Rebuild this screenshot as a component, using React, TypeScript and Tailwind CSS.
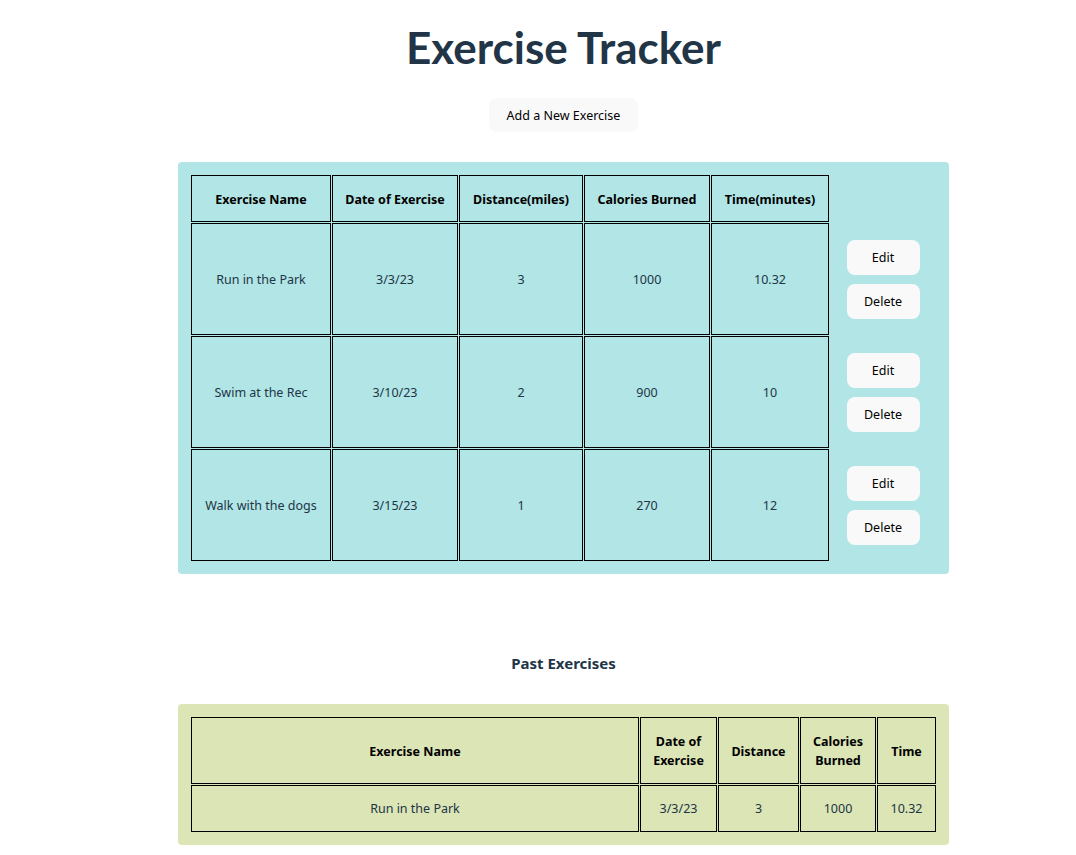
import React from "react";

const exercises = [
  { name: "Run in the Park", date: "3/3/23", distance: "3", calories: "1000", time: "10.32" },
  { name: "Swim at the Rec", date: "3/10/23", distance: "2", calories: "900", time: "10" },
  { name: "Walk with the dogs", date: "3/15/23", distance: "1", calories: "270", time: "12" },
];

const past = [{ name: "Run in the Park", date: "3/3/23", distance: "3", calories: "1000", time: "10.32" }];

const th = "border border-black pt-[3px] font-bold text-black text-[12.5px] align-middle";
const td = "border border-black pt-[2px] text-[12.5px] text-[#213547] align-middle";
const btn = "w-[73px] h-[35px] pt-[2px] rounded-lg bg-[#f9f9f9] text-black text-[12.5px]";

export default function App() {
  return (
    <div className="min-h-screen bg-white font-['Noto_Sans',sans-serif] text-center text-[#213547]">
      <div className="ml-[178px] w-[771px] flex flex-col items-center">
        <h1 className="mt-[19px] font-['Lato',sans-serif] text-[44px] leading-[56px] font-bold text-[#213547]">
          Exercise Tracker
        </h1>

        <button className="mt-[23px] h-[34px] px-[18px] pt-[3px] rounded-lg bg-[#f9f9f9] text-black text-[12.5px]">
          Add a New Exercise
        </button>

        {/* current exercises */}
        <div className="mt-[30px] w-full rounded bg-[#b2e5e5] px-[12px] pt-[12px] pb-[12px]">
          <table className="w-[747px] table-fixed border-separate border-spacing-[1px]">
            <colgroup>
              <col className="w-[140px]" />
              <col className="w-[126px]" />
              <col className="w-[124px]" />
              <col className="w-[126px]" />
              <col className="w-[118px]" />
              <col className="w-[106px]" />
            </colgroup>
            <thead>
              <tr className="h-[47px]">
                <th className={th}>Exercise Name</th>
                <th className={th}>Date of Exercise</th>
                <th className={th}>Distance(miles)</th>
                <th className={th}>Calories Burned</th>
                <th className={th}>Time(minutes)</th>
                <th></th>
              </tr>
            </thead>
            <tbody>
              {exercises.map((e) => (
                <tr key={e.name} className="h-[112px]">
                  <td className={td}>{e.name}</td>
                  <td className={td}>{e.date}</td>
                  <td className={td}>{e.distance}</td>
                  <td className={td}>{e.calories}</td>
                  <td className={td}>{e.time}</td>
                  <td className="align-middle">
                    <div className="flex flex-col items-center gap-[9px]">
                      <button className={btn}>Edit</button>
                      <button className={btn}>Delete</button>
                    </div>
                  </td>
                </tr>
              ))}
            </tbody>
          </table>
        </div>

        <h3 className="mt-[79px] text-[15px] leading-[20px] font-bold text-[#213547]">Past Exercises</h3>

        {/* past exercises */}
        <div className="mt-[31px] w-full rounded bg-[#dce5b5] px-[12px] py-[12px]">
          <table className="w-[747px] table-fixed border-separate border-spacing-[1px]">
            <colgroup>
              <col className="w-[448px]" />
              <col className="w-[77px]" />
              <col className="w-[81px]" />
              <col className="w-[76px]" />
              <col className="w-[59px]" />
            </colgroup>
            <thead>
              <tr className="h-[67px]">
                <th className={th}>Exercise Name</th>
                <th className={th}>Date of<br />Exercise</th>
                <th className={th}>Distance</th>
                <th className={th}>Calories<br />Burned</th>
                <th className={th}>Time</th>
              </tr>
            </thead>
            <tbody>
              {past.map((e) => (
                <tr key={e.name} className="h-[47px]">
                  <td className={td}>{e.name}</td>
                  <td className={td}>{e.date}</td>
                  <td className={td}>{e.distance}</td>
                  <td className={td}>{e.calories}</td>
                  <td className={td}>{e.time}</td>
                </tr>
              ))}
            </tbody>
          </table>
        </div>
      </div>
    </div>
  );
}
